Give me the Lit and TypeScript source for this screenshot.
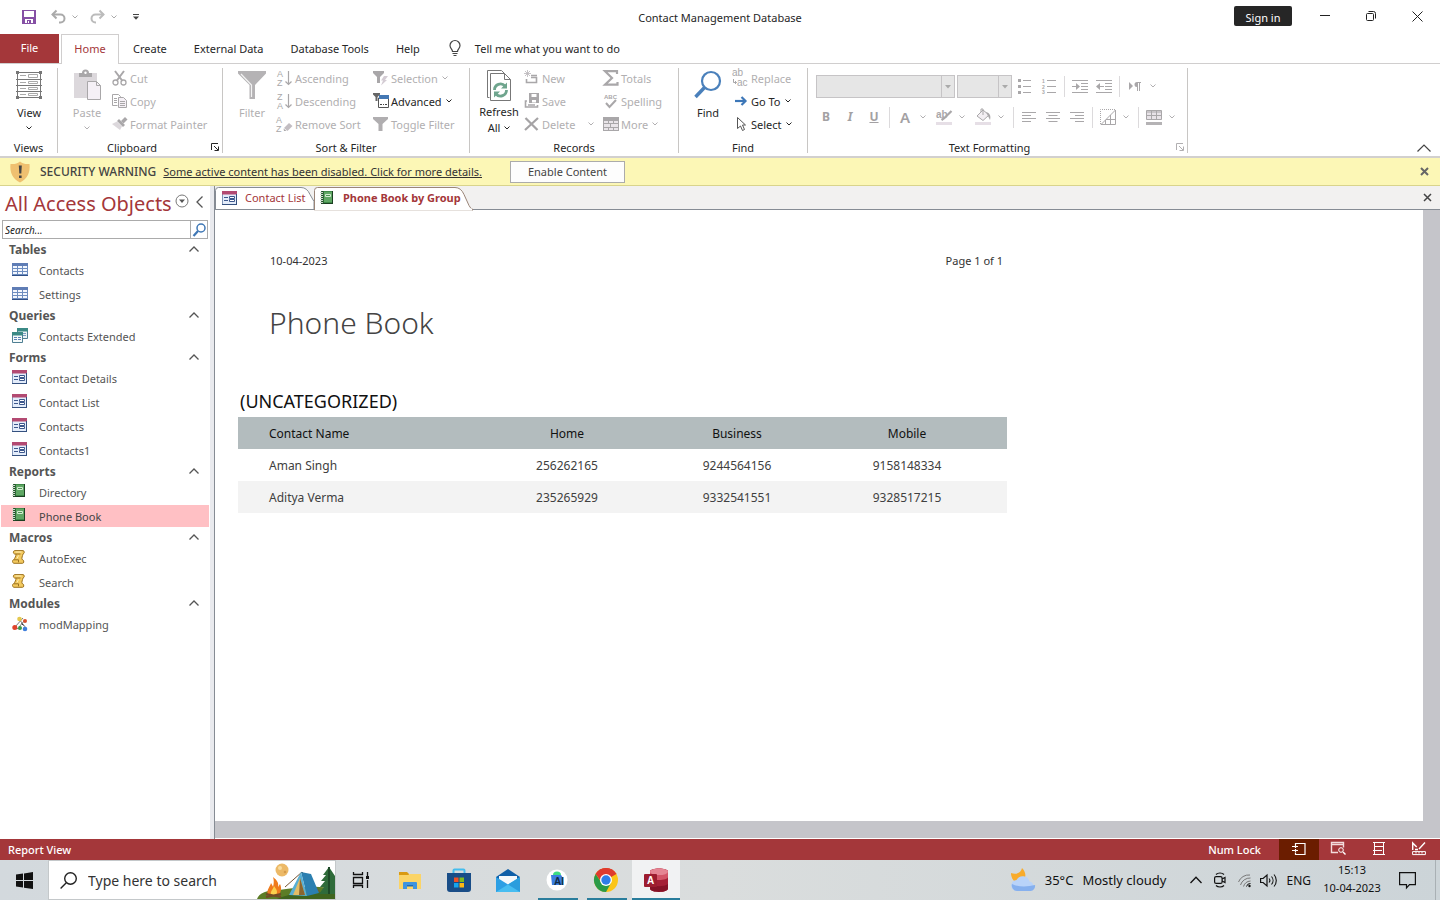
import { LitElement, html, svg, css, nothing, TemplateResult } from "lit";
import { customElement, property } from "lit/decorators.js";
import { classMap } from "lit/directives/class-map.js";

const draw = (w: number, h: number, body: unknown) =>
  html`<svg width=${w} height=${h} viewBox="0 0 ${w} ${h}" aria-hidden="true" fill="none">${body}</svg>`;

const G = "#a9a7a9";
const L = "#dcd8dc";
const glyph = (x: number, y: number, size: number, text: string, color = G, weight = 700) =>
  svg`<text x=${x} y=${y} font-family="Liberation Sans, sans-serif" font-size=${size} font-weight=${weight} fill=${color}>${text}</text>`;

const icons: Record<string, TemplateResult> = {
  save: draw(14, 14, svg`<path d="M0 0h14v14H0z" fill="#8650a5"/><path d="M2 1h10v6H2z M3 9h8v4H3z" fill="#fff"/><path d="M5 10h4v3H5z" fill="#8650a5"/><path d="M6 11h1v2H6z" fill="#fff"/>`),
  undo: draw(15, 14, svg`<path d="M1.500 4.500h8a4 4 0 0 1 0 8H8" stroke="#aaa" stroke-width="2"/><path d="M5.500 0.500l-4 4 4 4" stroke="#aaa" stroke-width="2"/>`),
  redo: draw(15, 14, svg`<path d="M13.500 4.500h-8a4 4 0 0 0 0 8H6" stroke="#bbb" stroke-width="2"/><path d="M9.500 0.500l4 4-4 4" stroke="#bbb" stroke-width="2"/>`),
  chev: draw(6, 4, svg`<path d="M0.500 0.500L3 3 5.500 0.500" stroke="currentColor"/>`),
  custom: draw(6, 6, svg`<path d="M0 0.500h6" stroke="#444"/><path d="M0 2.500h6L3 5.800z" fill="#444"/>`),
  min: draw(10, 10, svg`<path d="M0 4.500h10" stroke="#222"/>`),
  restore: draw(10, 10, svg`<rect x=".5" y="2.500" width="7" height="7" rx="1" stroke="#222"/><path d="M2.500 0.500h5a2 2 0 0 1 2 2v5" stroke="#222"/>`),
  close: draw(11, 11, svg`<path d="M0.500 0.500l10 10M10.500 0.500l-10 10" stroke="#222"/>`),
  bulb: draw(12, 17, svg`<path d="M3.500 11.500C3.500 9 1 8.500 1 5.500a5 5 0 0 1 10 0c0 3-2.500 3.500-2.500 6z M3.500 13.500h5 M4.500 15.500h3" stroke="#444" stroke-width="1.200"/>`),
  view: draw(26, 28, svg`<path d="M1.500 0v28M24.500 0v28M0 1.500h26M0 8.500h26M0 14.500h26M0 20.500h26M0 26.500h26" stroke="#777"/><path d="M12.500 3.500h9v3h-9zM12.500 10.500h9v2h-9zM12.500 16.500h9v2h-9zM12.500 22.500h9v2h-9z" stroke="#aaa"/><path d="M4 4.500h6M4 11.500h6M4 17.500h6M4 23.500h6" stroke="#aaa"/><path d="M0 0h3v3H0zM23 0h3v3h-3zM0 25h3v3H0zM23 25h3v3h-3z" fill="#777"/>`),
  paste: draw(30, 30, svg`<path d="M2 3h23v25H2z" fill="${L}"/><path d="M7 7V3h3a3.500 3.500 0 0 1 7 0h3v4z" fill="${G}"/><circle cx="13.500" cy="2.800" r="1.200" fill="#fff"/><path d="M15.500 11.500h9l4 4v14h-13z" fill="#f5f0f6" stroke="${G}"/><path d="M24.500 11.500v4h4" stroke="${G}"/>`),
  cut: draw(16, 16, svg`<path d="M3 1l7.500 10M12 1L4.500 11" stroke="${G}" stroke-width="2"/><circle cx="3.500" cy="12.500" r="2.500" stroke="${G}" stroke-width="1.300"/><circle cx="11.500" cy="12.500" r="2.500" stroke="${G}" stroke-width="1.300"/>`),
  copy: draw(16, 16, svg`<path d="M5.500 12.500h-5v-11h6l2 2v1" stroke="${G}"/><path d="M2 5.500h3M2 7.500h3M2 9.500h3" stroke="${G}"/><path d="M6.500 4.500h5l3 3v7h-8z" fill="#f5f0f6" stroke="${G}"/><path d="M8 8.500h5M8 10.500h5M8 12.500h5" stroke="${G}"/>`),
  painter: draw(16, 16, svg`<path d="M0 8l5-2.500 5 5L8 14z" fill="${L}"/><path d="M5 5l2-2 6 6-2 2z" fill="${G}"/><path d="M9 5l4-4 2.500 2.500-4 4z" fill="${G}"/>`),
  launch: draw(8, 8, svg`<path d="M0.500 7V0.500H7M3 3l4 4M7.500 3.500v4h-4" stroke="currentColor"/>`),
  funnel: draw(28, 28, svg`<path d="M0 0h28v2.500L17 14v14h-5.500V14L0 2.500z" fill="#b5b3b5"/><path d="M3 3l10.500 11v12" stroke="#f3f3f3" stroke-width="1.200"/>`),
  asc: draw(16, 16, svg`${glyph(0, 7, 9, "A", G, 400)}${glyph(0, 16, 9, "Z", G, 400)}<path d="M11.500 1v13M8.500 11.500l3 3 3-3" stroke="${G}" stroke-width="1.200"/>`),
  desc: draw(16, 16, svg`${glyph(0, 7, 9, "Z", G, 400)}${glyph(0, 16, 9, "A", G, 400)}<path d="M11.500 1v13M8.500 11.500l3 3 3-3" stroke="${G}" stroke-width="1.200"/>`),
  unsort: draw(16, 16, svg`${glyph(-1, 7, 9, "A", G, 400)}${glyph(-1, 16, 9, "Z", G, 400)}<path d="M7 12l5-5 3.500 3-5 5z" fill="#c2bdc2"/><path d="M6.500 12.500l3 2.500H7z" fill="${G}"/>`),
  selection: draw(16, 16, svg`<path d="M0 1h11v2L7 7v6H4V7L0 3z" fill="${G}"/><path d="M11 6h4l-3 4h2l-6 5.500 2-5H8z" fill="#d4ccd4"/>`),
  advanced: draw(16, 16, svg`<path d="M0 0h7v1.500L4.500 4v4h-2V4L0 1.500z" fill="#666"/><path d="M5.500 5v9.500h10V5z" fill="#fff" stroke="#555"/><path d="M6 2h10v4H6z" fill="#4478b4"/><path d="M7 11h2v1H7zM10 11h1v1h-1zM12 11h2v1h-2z" fill="#444"/>`),
  toggle: draw(16, 16, svg`<path d="M0 1h15v2L9.500 8v7h-4V8L0 3z" fill="#b0aeb0"/>`),
  refresh: draw(26, 31, svg`<path d="M3.500 27.500h-2V0.500h14l4 4" stroke="#777"/><path d="M4.500 3.500h14l6 6v21h-20z" fill="#fff" stroke="#777"/><path d="M18.500 3.500v6h6" stroke="#777"/><path d="M8.500 20a6 6 0 0 1 10.500-4M20.500 20a6 6 0 0 1-10.500 4" stroke="#6fa58e" stroke-width="2.800"/><path d="M21 12.500v6h-6zM8 27.500v-6h6z" fill="#6fa58e"/>`),
  new: draw(16, 16, svg`<path d="M3.500 0v7M0 3.500h7M1 1l5 5M6 1L1 6" stroke="#b9b5b9" stroke-width=".8"/><path d="M7 5.500h6M2.500 9v3.500h10v-5H7" stroke="${G}" stroke-width="1.600"/>`),
  rsave: draw(16, 16, svg`<path d="M5 0h10v10H5z" fill="${G}"/><path d="M7.500 1h5v3h-5zM8 7h4v2.500H8z" fill="#fff"/><path d="M3 8H1.500v6h12v-2M4 12h7" stroke="${G}" stroke-width="1.600"/>`),
  del: draw(16, 16, svg`<path d="M1.500 2l12 12M14 2L1 14" stroke="#a5a3a5" stroke-width="2.200"/>`),
  sum: draw(16, 16, svg`<path d="M14 4V1.200H2L9 8l-7 6.700h12.500V12" stroke="${G}" stroke-width="2.200"/>`),
  spell: draw(16, 16, svg`${glyph(1, 6, 6, "ABC")}<path d="M3 10l3.500 4 6.500-7" stroke="${G}" stroke-width="2"/>`),
  more: draw(16, 16, svg`<path d="M0 1h16v14H0z" fill="${G}"/><path d="M1 5h4v2H1zM6 5h4v2H6zM11 5h4v2h-4zM1 8h6v3H1zM8 8h7v3H8zM1 12h4v2H1zM6 12h4v2H6zM11 12h4v2h-4z" fill="#e9e5e9"/>`),
  find: draw(28, 28, svg`<circle cx="17" cy="10" r="9" stroke="#4a80bb" stroke-width="2.200"/><path d="M10.500 16.500L1.500 26" stroke="#4a80bb" stroke-width="3.500"/>`),
  replace: draw(16, 16, svg`${glyph(-1, 6, 10, "ab", G, 400)}${glyph(4, 16, 10, "ac", G, 400)}<path d="M.5 9v3.500H3.500M2 11l1.500 1.500L2 14" stroke="${G}"/>`),
  goto: draw(16, 16, svg`<path d="M2 8h9" stroke="#3d77b8" stroke-width="2.200"/><path d="M8.500 4l4 4-4 4" stroke="#3d77b8" stroke-width="2.200"/>`),
  pointer: draw(16, 16, svg`<path d="M4.500 1.500v11l3-2.500 2 4.500 2-1-2-4.500h3z" fill="#fff" stroke="#555"/>`),
  bullets: draw(16, 16, svg`<path d="M6 2.500h8M6 8.500h8M6 14.500h8" stroke="${G}"/><path d="M1 1h3v3H1zM1 7h3v3H1zM1 13h3v3H1z" fill="${G}"/>`),
  numbers: draw(16, 16, svg`<path d="M6 2.500h9M6 8.500h9M6 14.500h9" stroke="${G}"/>${glyph(1, 5, 5, "1")}${glyph(1, 11, 5, "2")}${glyph(1, 16, 5, "3")}`),
  indent: draw(16, 16, svg`<path d="M0 2.500h16M9 5.500h7M9 8.500h7M9 11.500h7M0 14.500h16M0 8.500h5" stroke="${G}"/><path d="M4 5l4 3.500L4 12z" fill="${G}"/>`),
  outdent: draw(16, 16, svg`<path d="M0 2.500h16M9 5.500h7M9 8.500h7M9 11.500h7M0 14.500h16M3 8.500h5" stroke="${G}"/><path d="M4 5L0 8.500 4 12z" fill="${G}"/>`),
  para: draw(16, 16, svg`<path d="M2 4l4 4-4 4z" fill="${G}"/><path d="M7.500 6.500A2.500 2.500 0 0 1 10 4h4v1h-1v8h-1V5h-1v8h-1V9a2.500 2.500 0 0 1-2.500-2.500z" fill="${G}"/>`),
  hilite: draw(18, 18, svg`${glyph(1, 10, 10, "ab")}<path d="M16.500 3l-7 7-3 2" stroke="${G}" stroke-width="2.200"/><path d="M1 14h16v3H1z" fill="#e6dfe6"/>`),
  bucket: draw(18, 18, svg`<path d="M3 8l6-6 6 5-6 5.500z" fill="#f3eff3" stroke="${G}"/><path d="M9 7V1h-2v3" stroke="${G}"/><path d="M12 4c4 1 5 4 4 8l-2-4z" fill="${G}"/><path d="M1 14h16v3H1z" fill="#e6dfe6"/>`),
  left: draw(16, 16, svg`<path d="M1 3.500h14M1 6.500h9M1 9.500h14M1 12.500h9" stroke="${G}"/>`),
  center: draw(16, 16, svg`<path d="M1 3.500h14M3.500 6.500h9M1 9.500h14M3.500 12.500h9" stroke="${G}"/>`),
  right: draw(16, 16, svg`<path d="M1 3.500h14M6 6.500h9M1 9.500h14M6 12.500h9" stroke="${G}"/>`),
  grid: draw(16, 16, svg`<path d="M0.500 15V0.500H15" stroke="${G}" stroke-dasharray="1 1"/><path d="M1 15.500L15.500 1v14.500zM6 10.500h9M10.500 6v9M5.500 11v4" stroke="${G}"/>`),
  altrow: draw(16, 16, svg`<path d="M.5 1.500h15v9H.500z" fill="#e8e3e8" stroke="${G}"/><path d="M1 3h14M1 6.500h14M5.500 2v8M10.500 2v8" stroke="${G}"/><path d="M0 13h16v3H0z" fill="#b5b3b5"/>`),
  up: draw(14, 8, svg`<path d="M0.500 7.500L7 1l6.500 6.500" stroke="#444" stroke-width="1.200"/>`),
  shield: draw(20, 22, svg`<path d="M10 0.500c3 2.500 6 2.800 9.500 2.500 1 8-2 15-9.500 18.500C2.500 18 -.5 11 .5 3 4 3.300 7 3 10 .5z" fill="#efc070"/><path d="M8.800 4.500h3l-.5 8h-2zM9 14.500h2.600V17H9z" fill="#444"/>`),
  boldx: draw(9, 9, svg`<path d="M1 1l7 7M8 1L1 8" stroke="#666" stroke-width="2"/>`),
  tabx: draw(9, 9, svg`<path d="M1 1l7 7M8 1L1 8" stroke="#444" stroke-width="1.500"/>`),
  round: draw(14, 14, svg`<circle cx="7" cy="7" r="6" stroke="#777"/><path d="M4 5.500h6L7 9z" fill="#555"/>`),
  collapse: draw(7, 12, svg`<path d="M6.500 0.500L1 6l5.500 5.500" stroke="#555" stroke-width="1.300"/>`),
  mag: draw(14, 14, svg`<circle cx="9" cy="5" r="4" stroke="#3f77b5" stroke-width="1.500"/><path d="M6 8l-4.500 5" stroke="#3f77b5" stroke-width="2.200"/>`),
  caret: draw(10, 6, svg`<path d="M0.500 5.500L5 1l4.500 4.500" stroke="#555" stroke-width="1.300"/>`),
  table: draw(16, 14, svg`<path d="M0 1h16v12H0z" fill="#6c8cbf"/><path d="M0 1h16v3H0z" fill="#5f7db5"/><path d="M1 4h4v2H1zM6 4h4v2H6zM11 4h4v2h-4zM1 7h4v2H1zM6 7h4v2H6zM11 7h4v2h-4zM1 10h4v2H1zM6 10h4v2H6zM11 10h4v2h-4z" fill="#f2f6fd"/><path d="M0 13.500h16" stroke="#2f4f86"/>`),
  query: draw(16, 15, svg`<path d="M5.500.5h10v10h-10z" fill="#eaf3f3" stroke="#4e7f93"/><path d="M5 0h11v3.500H5z" fill="#3b8a86"/><path d="M11 5.500h3M11 7.500h3" stroke="#7b9cc0"/><path d="M.5 4.500h10v10H.5z" fill="#f5fafa" stroke="#4e7f93"/><path d="M0 4h11v3.500H0z" fill="#3b8a86"/><path d="M2 9.500h3M6 9.500h3M2 11.500h3M6 11.500h3" stroke="#5d80b5"/>`),
  form: draw(15, 14, svg`<path d="M.5.5h14v13H.5z" fill="#e3ecfa" stroke="#8095b8"/><path d="M0 0h15v3.500H0z" fill="#b34a72"/><path d="M2 6.500h4M2 9.500h4" stroke="#3c578c"/><path d="M7.500 5.500h5v2h-5zM7.500 8.500h5v2h-5z" fill="#fff" stroke="#3c578c"/><path d="M14.500 3v11M0 13.500h15" stroke="#34507f"/>`),
  report: draw(13, 13, svg`<path d="M1 0h12v13H1z" fill="#3f8a48"/><path d="M4 1h8v10H4z" fill="#5fa764"/><path d="M5.500 3.500h5v2h-5z" fill="#4b9252" stroke="#d3ecd2"/><path d="M12.500 0v13M1 12.500h12" stroke="#1c3f22"/><path d="M2.500 0v13" stroke="#234c2a" stroke-width="2"/><path d="M0 1.500h3M0 3.500h3M0 5.500h3M0 7.500h3M0 9.500h3M0 11.500h3" stroke="#cfd8cf"/>`),
  macro: draw(13, 14, svg`<path d="M2.500.6h8.500c1.800.3 1.600 2.900 0 3.400C10.500 6 9.500 8 10 9.500c2 0 2.500 3.800.5 3.800H2C0 13 0 10 2 9.500 3 8 4 6 4 4H2.500C1 3.500 1 1 2.500.6z" fill="#f3c95e" stroke="#9c7220"/><path d="M4 4h4.500M2 9.800h4.500v2.500" stroke="#9c7220"/><path d="M3.500 2h6M6.500 5.500L5 8.500" stroke="#fdeeb8"/>`),
  module: draw(16, 16, svg`<path d="M3 11l8-9M7 3l7 9M2 12l6 1M7 11l6-7" stroke="#777"/><circle cx="7.500" cy="3" r="2.300" fill="#e4c84e"/><circle cx="13" cy="5" r="2" fill="#d9512f"/><circle cx="2.800" cy="11.500" r="2.500" fill="#e0432b"/><circle cx="8" cy="12" r="2" fill="#3c9a47"/><circle cx="13" cy="13" r="2.300" fill="#3f7fdc"/><path d="M9.500 7.500l2 2" stroke="#333"/>`),
  win: draw(17, 17, svg`<path d="M0 2.500L7 1.500V8H0zM8 1.400L17 0v8H8zM0 9h7v6.500L0 14.500zM8 9h9v8l-9-1.300z" fill="#111"/>`),
  search: draw(17, 17, svg`<circle cx="10.500" cy="6.500" r="5.800" stroke="#222" stroke-width="1.400"/><path d="M6.300 10.700L.6 16.400" stroke="#222" stroke-width="1.400"/>`),
  camp: draw(78, 38, svg`<path d="M0 38c2-6 10-9 22-9 20-3 40-5 56-1v10z" fill="#5c7d26"/><path d="M20 38c12-6 38-8 58-5v5z" fill="#3f641e"/><circle cx="25" cy="9" r="6.500" fill="#ecb967"/><circle cx="23" cy="7" r="2" fill="#f8dc9d"/><circle cx="28" cy="11" r="1.300" fill="#d59b4b"/><path d="M72 6l6 9v18h-16l5-7h-4l5-6h-4l5-6h-3z" fill="#2f6b3a"/><path d="M72 6v27" stroke="#1e4a28" stroke-width="2"/><path d="M45 11l-17 15M45 11l18 20" stroke="#775432"/><path d="M44 11l10 2 8 19-12 3z" fill="#2b7fb0"/><path d="M44 11l6 24-18-1z" fill="#58afd4"/><path d="M43 17l-7 17h12z" fill="#e3bd66"/><path d="M43 17l-1 17h6z" fill="#8a6530"/><path d="M11 34c-2-5 2-8 3-12 1 2 2 3 2 4 1-4 1-7 0-10 4 3 6 6 5 10l2-3c2 4 1 8-1 11z" fill="#ef7b1d"/><path d="M14 34c-1-4 2-5 3-9 3 4 4 6 2 9z" fill="#fbd04c"/><path d="M9 33l15 3M9 36l15-3" stroke="#734b25" stroke-width="2"/>`),
  tasks: draw(17, 16, svg`<path d="M1.500 0v2.500h9V0M1.500 5.500h9v6h-9zM1.500 16v-2.500h9V16M15.500 0v4M15.500 8v8" stroke="#111" stroke-width="1.300"/><path d="M14 4h3v3h-3z" fill="#111"/>`),
  explorer: draw(22, 19, svg`<path d="M0 1h8l2 2v4H0z" fill="#d99a13"/><path d="M0 4h9l2-1h11v15H0z" fill="#fbd467"/><path d="M4 18v-6a1 1 0 0 1 1-1h12a1 1 0 0 1 1 1v6h-4v-4H8v4z" fill="#3e93df"/><path d="M8 14h6v1.500H8z" fill="#1c69b5"/>`),
  store: draw(24, 24, svg`<path d="M6.500 6V2.500a1 1 0 0 1 1-1h9a1 1 0 0 1 1 1V6" stroke="#44bdee" stroke-width="2"/><path d="M0 5h24v16a3 3 0 0 1-3 3H3a3 3 0 0 1-3-3z" fill="#194d87"/><path d="M7 9.500h4.500V14H7z" fill="#f05024"/><path d="M12.500 9.500H17V14h-4.500z" fill="#7fba1f"/><path d="M7 15h4.500v4.500H7z" fill="#15a5ee"/><path d="M12.500 15H17v4.500h-4.500z" fill="#fdb813"/>`),
  mail: draw(24, 23, svg`<path d="M0 8l12-8 12 8v3H0z" fill="#0f5fa8"/><path d="M3 7h18v10H3z" fill="#f4f8fb"/><path d="M0 8l24 15H0z" fill="#2c9fe4"/><path d="M24 8v15H0z" fill="#46bdf1"/><path d="M24 8v15L12 15.500z" fill="#2b9ddd"/>`),
  android: draw(22, 22, svg`<circle cx="11" cy="11" r="10.500" fill="#fff"/><path d="M7 6a4 3.500 0 0 1 8 0z" fill="#3ddc84"/><path d="M5 6h10l2 3v7H6z" fill="#3b7de0"/>${glyph(8, 16, 10, "AI", "#102b45")}`),
  chrome: draw(24, 24, svg`<circle cx="12" cy="12" r="12" fill="#fbc518"/><path d="M12 12L1.600 6A12 12 0 0 1 22.400 6z" fill="#df3b2f"/><path d="M12 6h10.400A12 12 0 0 0 1.600 6l5 7z" fill="#df3b2f"/><path d="M1.600 6A12 12 0 0 0 12 24l5-9-5 2-5-3z" fill="#2a9a48"/><circle cx="12" cy="12" r="6" fill="#fff"/><circle cx="12" cy="12" r="4.700" fill="#2f7de9"/>`),
  access: draw(24, 24, svg`<path d="M6 3.500C6-.5 24-.5 24 3.500v17c0 4.500-18 4.500-18 0z" fill="#a41f35"/><path d="M6 3.500C6-.5 24-.5 24 3.500V9c0 4-18 4-18 0z" fill="#d35467"/><ellipse cx="15" cy="3.800" rx="9" ry="3.300" fill="#e58593"/><path d="M6 16c4 3 14 3 18 0v4.500c0 4.500-18 4.500-18 0z" fill="#851226"/><rect y="6" width="13" height="13" rx="1" fill="#9d1d2f"/>${glyph(3, 16, 10, "A", "#fff")}`),
  weather: draw(25, 24, svg`<path d="M11 0c5 5 4 11 0 14H5C2 13 0 9 0 5c5 2 10 0 11-5z" fill="#f8ab2c"/><path d="M6 23a5.500 5.500 0 0 1-.5-11 7 7 0 0 1 13 1.500A5 5 0 0 1 19.500 23z" fill="#b9d3f9"/><path d="M6 23a5.500 5.500 0 0 1-5-7c6 3 15 3 23 1a5 5 0 0 1-4.500 6z" fill="#86b0ee"/>`),
  chevup: draw(12, 8, svg`<path d="M.5 7L6 1.200 11.500 7" stroke="#111" stroke-width="1.300"/>`),
  meet: draw(12, 16, svg`<path d="M2 2.500C4 .5 8 .5 10 2.500M2 13.500c2 2 6 2 8 0" stroke="#111" stroke-width="1.200"/><rect x=".6" y="4.600" width="7.500" height="6.800" rx="1.500" stroke="#111" stroke-width="1.200"/><path d="M8 7l3-1.500v5L8 9" stroke="#111" stroke-width="1.200"/>`),
  wifi: draw(13, 13, svg`<path d="M.5 8A11 11 0 0 1 12 1M2.500 11A10 10 0 0 1 12.500 4M5.500 12.500a8 8 0 0 1 7-5.500" stroke="#777"/><path d="M8.500 12.500a4 4 0 0 1 4-3" stroke="#111"/><circle cx="11.500" cy="12" r="1.200" fill="#111"/>`),
  sound: draw(17, 13, svg`<path d="M.6 4.500h2.500L7 1v11L3.100 8.500H.6z" stroke="#111" stroke-width="1.200"/><path d="M9 4.500a3 3 0 0 1 0 4M11.500 2.500a6 6 0 0 1 0 8M14 .5a9 9 0 0 1 0 12" stroke="#111" stroke-width="1.100"/>`),
  notif: draw(17, 17, svg`<path d="M.6.600h15.800v12H10.500l-3 3.400v-3.400H.6z" stroke="#111" stroke-width="1.200"/>`),
  vreport: draw(14, 14, svg`<path d="M5 1.500h8v11H3.500v-2M3.500 4V1.500h2M0 4.500h6M0 8.500h6M3.500 3v3M3.500 7v3" stroke="#fff" stroke-width="1.200"/>`),
  vprint: draw(15, 13, svg`<path d="M7 10.500H.5V.5h12v5M.5 2.500h12" stroke="#f3dcdc" stroke-width="1.400"/><circle cx="10" cy="8" r="2.300" stroke="#fff"/><path d="M12 10l2.500 2.500" stroke="#fff" stroke-width="1.400"/>`),
  vlayout: draw(12, 13, svg`<path d="M1.500.5h9v12h-9zM0 .5h12M0 12.500h12M2 4.500h9M0 8.500h9" stroke="#fff"/>`),
  vdesign: draw(14, 13, svg`<path d="M.7 8V1l4 4M7 7l6-6.500M3 7.500h3" stroke="#fff" stroke-width="1.400"/><path d="M.6 9.600h12.800v3H.6zM4 10v1.500M7 10v1.500M10 10v1.500" stroke="#fff"/>`),
};

const base = css`
  :host { box-sizing: border-box; font-family: "Noto Sans", "Open Sans", sans-serif; font-size: 11px; color: #262626; }
  *, *::before, *::after { box-sizing: border-box; }
  button, input, select { font: inherit; color: inherit; border: 0; padding: 0; margin: 0; background: none; border-radius: 0; outline: none; }
  button { display: flex; align-items: center; justify-content: center; white-space: nowrap; }
  svg { display: block; flex: none; overflow: visible; }
`;

@customElement("title-bar")
class TitleBar extends LitElement {
  static styles = [base, css`
    :host { display: grid; grid-template-columns: 1fr auto 1fr; height: 34px; align-items: center; }
    .quick { display: flex; align-items: center; padding-left: 22px; gap: 6px; color: #aaa; }
    .quick .first { margin-right: 9px; }
    .quick .redo { margin-left: 6px; }
    .quick .last { margin-left: 10px; }
    .win { display: flex; justify-content: flex-end; align-items: center; height: 34px; padding-bottom: 2px; }
    .win .w { width: 46px; height: 30px; }
    .sign { background: #262626; color: #fff; width: 58px; height: 20px; border-radius: 2px; margin-right: 10px; padding-top: 2px; }
  `];
  render() {
    return html`
      <div class="quick">
        <button class="first" aria-label="Save">${icons.save}</button>
        <button aria-label="Undo">${icons.undo}</button><button aria-label="Undo list">${icons.chev}</button>
        <button class="redo" aria-label="Redo">${icons.redo}</button><button aria-label="Redo list">${icons.chev}</button>
        <button class="last" aria-label="Customize">${icons.custom}</button>
      </div>
      <div>Contact Management Database</div>
      <div class="win">
        <button class="sign">Sign in</button>
        <button class="w" aria-label="Minimize">${icons.min}</button>
        <button class="w" aria-label="Restore">${icons.restore}</button>
        <button class="w" aria-label="Close">${icons.close}</button>
      </div>`;
  }
}

@customElement("ribbon-tabs")
class RibbonTabs extends LitElement {
  static styles = [base, css`
    :host { display: flex; gap: 1px; height: 30px; border-bottom: 1px solid #d0cece; }
    button { padding: 0 13px 2px; height: 30px; }
    .file { background: #a4373a; color: #fff; width: 59px; height: 29px; margin-right: 1px; }
    .home { background: #fff; color: #a4373a; border: 1px solid #d0cece; border-bottom: 0; width: 58px; padding: 0 0 2px; }
    .tell { gap: 14px; padding-left: 15px; }
  `];
  render() {
    return html`<button class="file">File</button><button class="home">Home</button>
      ${["Create", "External Data", "Database Tools", "Help"].map((t) => html`<button>${t}</button>`)}
      <button class="tell">${icons.bulb}Tell me what you want to do</button>`;
  }
}

type Cmd = { icon: string; text: string; on?: boolean; drop?: boolean; gap?: boolean };
const cmds: Record<string, Cmd[]> = {
  clip: [{ icon: "cut", text: "Cut" }, { icon: "copy", text: "Copy" }, { icon: "painter", text: "Format Painter" }],
  sort: [{ icon: "asc", text: "Ascending" }, { icon: "desc", text: "Descending" }, { icon: "unsort", text: "Remove Sort" }],
  filter: [{ icon: "selection", text: "Selection", drop: true }, { icon: "advanced", text: "Advanced", on: true, drop: true }, { icon: "toggle", text: "Toggle Filter" }],
  rec: [{ icon: "new", text: "New" }, { icon: "rsave", text: "Save" }, { icon: "del", text: "Delete", drop: true, gap: true }],
  rec2: [{ icon: "sum", text: "Totals" }, { icon: "spell", text: "Spelling" }, { icon: "more", text: "More", drop: true }],
  find: [{ icon: "replace", text: "Replace" }, { icon: "goto", text: "Go To", on: true, drop: true }, { icon: "pointer", text: "Select", on: true, drop: true }],
};

@customElement("ribbon-bar")
class RibbonBar extends LitElement {
  static styles = [base, css`
    :host { display: flex; height: 94px; padding-top: 4px; border-bottom: 2px solid #d2d0ce; }
    .group { display: grid; grid-template-rows: 69px 20px; height: 85px; border-right: 1px solid #c8c6c4; }
    .views { width: 58px; } .clipboard { width: 165px; } .sorting { width: 247px; }
    .records { width: 209px; } .finding { width: 129px; } .text { width: 380px; }
    .body { display: flex; padding-left: 5px; }
    .label { display: flex; align-items: center; justify-content: center; position: relative; }
    .label.more { padding-right: 16px; }
    .launch { position: absolute; right: 3px; top: 6px; }
    .big { display: flex; flex-direction: column; justify-content: flex-start; width: 48px; height: 68px; }
    .pic { display: flex; align-items: center; justify-content: center; height: 36px; }
    .big .cap { line-height: 16px; padding-top: 2px; }
    .big .sub { display: flex; align-items: center; justify-content: center; gap: 4px; height: 16px; line-height: 16px; }
    .col { display: grid; grid-template-rows: repeat(3, 23px); align-content: start; }
    .w96 { width: 96px; } .w78 { width: 79px; }
    .cmd { justify-content: flex-start; gap: 2px; padding-left: 1px; height: 20px; }
    .cmd .c { margin-left: 2px; }
    .cmd .far { margin-left: 11px; }
    .off { color: #b1afb1; }
    .format { display: flex; flex-direction: column; padding: 7px 0 0 8px; gap: 8px; }
    .line { display: flex; align-items: center; height: 23px; }
    .tool { width: 24px; height: 22px; color: #a3a1a3; font-weight: 700; font-size: 12px; padding-bottom: 2px; }
    .drop { width: 12px; height: 22px; margin-right: 3px; padding-bottom: 2px; }
    .sep { width: 1px; height: 21px; background: #dcdadc; margin: 0 3px; }
    .near { margin-left: -2px; }
    .combo { position: relative; display: block; height: 23px; margin-right: 2px; width: 139px; }
    .combo.small { width: 55px; margin-right: 1px; }
    .combo select { appearance: none; width: 100%; height: 100%; background: #e6e6e6; border: 1px solid #c6c4c6; opacity: 1; }
    .arrow { position: absolute; right: 0; top: 0; width: 14px; height: 23px; border: 1px solid #c6c4c6; display: flex; align-items: center; justify-content: center; pointer-events: none; }
    .i { font-style: italic; }
    .u { text-decoration: underline; }
    .a { font-size: 15px; font-weight: 600; }
    .fold { margin: auto 9px 4px auto; }
  `];
  col(list: Cmd[], width = "") {
    return html`<div class="col ${width}">${list.map((c) => html`<button class=${classMap({ cmd: true, off: !c.on })}>${icons[c.icon]}<span>${c.text}</span>${c.drop ? html`<span class=${c.gap ? "far" : "c"}>${icons.chev}</span>` : nothing}</button>`)}</div>`;
  }
  big(icon: string, text: string, off: boolean, sub: unknown = nothing) {
    return html`<button class=${classMap({ big: true, off })}><span class="pic">${icons[icon]}</span><span class="cap">${text}</span><span class="sub">${sub}</span></button>`;
  }
  group(cls: string, label: string, body: unknown, launch = "") {
    return html`<section class="group ${cls}" aria-label=${label}><div class="body">${body}</div>
      <div class=${classMap({ label: true, more: !!launch })}>${label}${launch ? html`<button class="launch ${launch}" aria-label="${label} options">${icons.launch}</button>` : nothing}</div></section>`;
  }
  tool(icon: string) { return html`<button class="tool" aria-label=${icon}>${icons[icon]}</button>`; }
  drop() { return html`<button class="drop off" aria-label="More choices">${icons.chev}</button>`; }
  combo(label: string, cls = "") {
    return html`<label class="combo ${cls}"><select aria-label=${label} disabled></select><span class="arrow"><svg width="6" height="4"><path d="M0 0h6L3 3.500z" fill="#aaa"/></svg></span></label>`;
  }
  render() {
    const sep = html`<span class="sep"></span>`;
    return html`
      ${this.group("views", "Views", this.big("view", "View", false, icons.chev))}
      ${this.group("clipboard", "Clipboard", html`${this.big("paste", "Paste", true, icons.chev)}${this.col(cmds.clip)}`, "on")}
      ${this.group("sorting", "Sort & Filter", html`${this.big("funnel", "Filter", true)}${this.col(cmds.sort, "w96")}${this.col(cmds.filter)}`)}
      ${this.group("records", "Records", html`${this.big("refresh", "Refresh", false, html`All ${icons.chev}`)}${this.col(cmds.rec, "w78")}${this.col(cmds.rec2)}`)}
      ${this.group("finding", "Find", html`${this.big("find", "Find", false)}${this.col(cmds.find)}`)}
      <section class="group text" aria-label="Text Formatting">
        <div class="format">
          <div class="line">${this.combo("Font")}${this.combo("Font size", "small")}${this.tool("bullets")}${this.tool("numbers")}${sep}${this.tool("indent")}${this.tool("outdent")}${sep}${this.tool("para")}${this.drop()}</div>
          <div class="line"><button class="tool near">B</button><button class="tool i">I</button><button class="tool u">U</button>${sep}<button class="tool a">A</button>${this.drop()}${this.tool("hilite")}${this.drop()}${this.tool("bucket")}${this.drop()}${sep}${this.tool("left")}${this.tool("center")}${this.tool("right")}${sep}${this.tool("grid")}${this.drop()}${sep}${this.tool("altrow")}${this.drop()}</div>
        </div>
        <div class="label more">Text Formatting<button class="launch off" aria-label="Text options">${icons.launch}</button></div>
      </section>
      <button class="fold" aria-label="Collapse ribbon">${icons.up}</button>`;
  }
}

@customElement("security-bar")
class SecurityBar extends LitElement {
  static styles = [base, css`
    :host { display: flex; align-items: center; height: 28px; padding: 0 11px 0 10px; background: #fcf7b6; border-bottom: 1px solid #d9d48c; color: #444; }
    strong { font-weight: 500; font-size: 12px; margin: 0 7px 0 10px; }
    a { color: #333; }
    .enable { width: 115px; height: 22px; margin-left: 28px; background: #fdfdfd; border: 1px solid #ababab; }
    .x { margin-left: auto; }
  `];
  render() {
    return html`${icons.shield}<strong>SECURITY WARNING</strong><a href="#details">Some active content has been disabled. Click for more details.</a>
      <button class="enable">Enable Content</button><button class="x" aria-label="Dismiss">${icons.boldx}</button>`;
  }
}

const tree = [
  { name: "Tables", icon: "table", items: ["Contacts", "Settings"] },
  { name: "Queries", icon: "query", items: ["Contacts Extended"] },
  { name: "Forms", icon: "form", items: ["Contact Details", "Contact List", "Contacts", "Contacts1"] },
  { name: "Reports", icon: "report", items: ["Directory", "Phone Book"] },
  { name: "Macros", icon: "macro", items: ["AutoExec", "Search"] },
  { name: "Modules", icon: "module", items: ["modMapping"] },
];

@customElement("object-pane")
class ObjectPane extends LitElement {
  @property() selected = "Phone Book";
  static styles = [base, css`
    :host { display: block; width: 215px; background: #fff; border-right: 1px solid #868c94; box-shadow: inset -4px 0 #e9eaee; padding-right: 4px; color: #555; }
    .head { display: flex; align-items: center; height: 34px; padding-left: 5px; color: #a4373a; }
    h1 { font-size: 20px; font-weight: 400; margin: 0; white-space: nowrap; }
    .menu { margin: 0 7px 4px 3px; }
    .fold { padding-bottom: 3px; }
    .find { display: flex; height: 19px; width: 206px; margin-left: 2px; border: 1px solid #ababab; }
    .find input { flex: 1; min-width: 0; padding-left: 2px; font-size: 10px; font-style: italic; }
    .find input::placeholder { color: #222; opacity: 1; }
    .find button { width: 17px; border-left: 1px solid #ababab; }
    .cat { justify-content: space-between; width: 100%; height: 18px; padding: 0 11px 0 9px; font-size: 12px; font-weight: 700; }
    .tree { display: flex; flex-direction: column; padding-top: 1px; }
    .item { width: 208px; height: 22px; margin: 1px; justify-content: flex-start; padding-left: 11px; }
    .ic { width: 27px; height: 17px; }
    .sel { background: #ffc0c4; color: #444; }
  `];
  render() {
    return html`<div class="head"><h1>All Access Objects</h1><button class="menu" aria-label="Choose category">${icons.round}</button><button class="fold" aria-label="Hide pane">${icons.collapse}</button></div>
      <div class="find"><input aria-label="Search objects" placeholder="Search..." /><button aria-label="Search">${icons.mag}</button></div>
      <div class="tree">${tree.map((g) => html`<button class="cat">${g.name}${icons.caret}</button>
        ${g.items.map((t) => html`<button class=${classMap({ item: true, sel: t === this.selected })}><span class="ic">${icons[g.icon]}</span>${t}</button>`)}`)}</div>`;
  }
}

@customElement("report-view")
class ReportView extends LitElement {
  static styles = [base, css`
    :host { display: flex; flex-direction: column; flex: 1; min-width: 0; }
    .tabs { display: flex; align-items: center; height: 24px; background: #f2f1f0; border-bottom: 1px solid #868c94; padding-right: 8px; }
    .tab { position: relative; height: 24px; gap: 8px; color: #a4373a; justify-content: flex-start; padding-left: 7px; width: 99px; }
    .tab.on { width: 160px; padding-left: 6px; gap: 10px; font-weight: 700; }
    .tab .edge { position: absolute; left: 0; top: 0; }
    .tab > :not(.edge) { position: relative; }
    .x { margin-left: auto; }
    .desk { flex: 1; display: flex; background: #c5c5ca; padding: 0 17px 17px 0; border-bottom: 1px solid #fff; }
    .page { flex: 1; background: #fff; padding: 41px 23px; }
    .meta { display: flex; justify-content: space-between; width: 765px; padding-left: 32px; line-height: 20px; color: #333; }
    h2 { font-size: 30px; font-weight: 300; line-height: 44px; color: #444; margin: 30px 0 0 31px; }
    h3 { font-size: 18px; font-weight: 400; line-height: 26px; color: #111; margin: 43px 0 3px 2px; }
    table { width: 769px; border-collapse: collapse; table-layout: fixed; font-size: 12px; color: #404040; }
    col.name { width: 244px; } col.phone { width: 170px; }
    th { font-weight: 400; background: #b3bcbe; height: 32px; color: #111; padding: 0; }
    td { height: 32px; padding: 0; text-align: center; }
    th:first-child, td:first-child { text-align: left; padding-left: 31px; }
    tr:nth-child(2) td { background: #f3f3f3; }
  `];
  render() {
    return html`
      <div class="tabs">
        <button class="tab"><svg class="edge" width="101" height="24"><path d="M.5 23.500V4.500q0-3 3-3H86q6 0 9 7l4 7v8z" fill="#fff" stroke="#868c94"/></svg>${icons.form}<span>Contact List</span></button>
        <button class="tab on"><svg class="edge" width="162" height="24"><path d="M.5 24V4.500q0-3 3-3H141q6 0 9 7l5 11q2 4 4 4V24z" fill="#fff" stroke="#9a8578"/><path d="M1 23.500h157" stroke="#fff" stroke-width="2"/></svg>${icons.report}<span>Phone Book by Group</span></button>
        <button class="x" aria-label="Close report">${icons.tabx}</button>
      </div>
      <div class="desk"><main class="page">
        <div class="meta"><span>10-04-2023</span><span>Page 1 of 1</span></div>
        <h2>Phone Book</h2>
        <h3>(UNCATEGORIZED)</h3>
        <table>
          <colgroup><col class="name" /><col class="phone" /><col class="phone" /><col class="phone" /><col /></colgroup>
          <thead><tr><th>Contact Name</th><th>Home</th><th>Business</th><th>Mobile</th><th></th></tr></thead>
          <tbody>
            <tr><td>Aman Singh</td><td>256262165</td><td>9244564156</td><td>9158148334</td><td></td></tr>
            <tr><td>Aditya Verma</td><td>235265929</td><td>9332541551</td><td>9328517215</td><td></td></tr>
          </tbody>
        </table>
      </main></div>`;
  }
}

@customElement("status-bar")
class StatusBar extends LitElement {
  static styles = [base, css`
    :host { display: flex; align-items: center; height: 21px; background: #a4373a; color: #fff; font-weight: 500; padding: 0 1px 0 8px; }
    .lock { margin-left: auto; margin-right: 18px; }
    .v { width: 40px; height: 21px; padding: 0 1px 2px 0; }
    .on { background: #6b1d00; }
  `];
  render() {
    return html`<span>Report View</span><span class="lock">Num Lock</span>
      <button class="v on" aria-label="Report View">${icons.vreport}</button><button class="v" aria-label="Print Preview">${icons.vprint}</button>
      <button class="v" aria-label="Layout View">${icons.vlayout}</button><button class="v" aria-label="Design View">${icons.vdesign}</button>`;
  }
}

@customElement("task-bar")
class TaskBar extends LitElement {
  static styles = [base, css`
    :host { display: flex; align-items: stretch; height: 40px; background: linear-gradient(90deg, #d3d9dd, #dadddd 50%, #ccd4d8); color: #111; }
    .start { width: 48px; }
    .search { display: flex; align-items: center; width: 288px; height: 40px; background: #fff; border: 1px solid #c4c8ca; padding-left: 11px; }
    .search input { flex: 1; min-width: 0; padding-left: 11px; font-size: 14px; }
    .search input::placeholder { color: #333; opacity: 1; }
    .app { width: 49px; border: solid transparent; border-width: 2px 0; position: relative; }
    .run::after { content: ""; position: absolute; left: 6px; right: 3px; bottom: -2px; height: 2px; background: #2a7d9c; }
    .live { background: #f1f2f3; border-color: #f1f2f3 #f1f2f3 #2a7d9c; margin-left: 2px; width: 48px; }
    .tray { display: flex; align-items: center; margin-left: auto; }
    .weather { font-size: 13px; gap: 9px; margin-right: 24px; }
    .small { gap: 12px; display: flex; align-items: center; }
    .tight { margin-left: -3px; }
    .lang { font-size: 12px; margin-left: -3px; }
    .clock { width: 72px; text-align: center; line-height: 18px; margin: 0 11px 2px 5px; display: block; }
    .end { width: 5px; height: 40px; border-left: 1px solid #a9b0b4; margin-left: 19px; }
  `];
  render() {
    const app = (n: string, cls = "") => html`<button class="app ${cls}" aria-label=${n}>${icons[n]}</button>`;
    return html`<button class="start" aria-label="Start">${icons.win}</button>
      <label class="search">${icons.search}<input aria-label="Type here to search" placeholder="Type here to search" />${icons.camp}</label>
      ${app("tasks")}${app("explorer")}${app("store")}${app("mail")}${app("android", "run")}${app("chrome", "run")}${app("access", "live")}
      <div class="tray">
        <button class="weather">${icons.weather}<span>35°C</span><span>Mostly cloudy</span></button>
        <div class="small"><button aria-label="Hidden icons">${icons.chevup}</button><button aria-label="Meet">${icons.meet}</button><button aria-label="Network">${icons.wifi}</button><button class="tight" aria-label="Volume">${icons.sound}</button><button class="lang">ENG</button></div>
        <button class="clock"><div>15:13</div><div>10-04-2023</div></button>
        <button aria-label="Notifications">${icons.notif}</button><span class="end"></span>
      </div>`;
  }
}

@customElement("app-root")
class AppRoot extends LitElement {
  static styles = css`
    :host { display: flex; flex-direction: column; min-height: 100vh; background: #fff; }
    .work { display: flex; flex: 1; }
  `;
  render() {
    return html`<title-bar></title-bar><ribbon-tabs></ribbon-tabs><ribbon-bar></ribbon-bar><security-bar></security-bar>
      <div class="work"><object-pane></object-pane><report-view></report-view></div>
      <status-bar></status-bar><task-bar></task-bar>`;
  }
}
